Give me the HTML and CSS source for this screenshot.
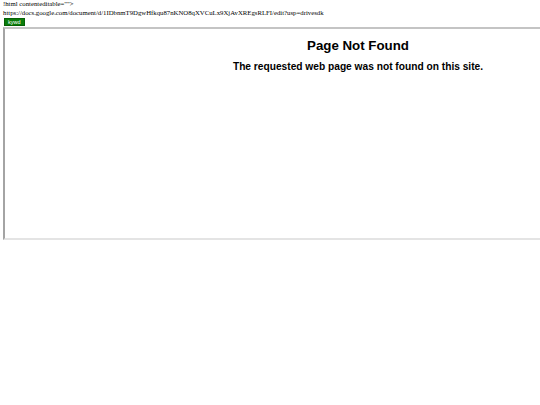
FILE: index.html
```html
<!DOCTYPE html>
<html>
<head>
<meta charset="utf-8">
<link rel="stylesheet" href="styles.css">
</head>
<body>
<div class="line">!html contenteditable=""&gt;</div>
<div class="line">https://docs.google.com/document/d/1IDbnmT9DgwHfkqu87nKNO8qXVCuLx9XjAvXREgsRLFI/edit?usp=drivesdk</div>
<button class="kywd">kywd</button>
<div class="frame">
  <div class="frame-inner">
    <h1 class="title">Page Not Found</h1>
    <h3 class="sub">The requested web page was not found on this site.</h3>
  </div>
</div>
</body>
</html>
```
FILE: styles.css
```css
html { overflow: hidden; background: #fff; }
body {
  margin: 0;
  padding: 0 0 0 3px;
  font-family: "Liberation Serif", serif;
  font-size: 6.75px;
  line-height: 8.5px;
  color: #000;
}
.line { white-space: nowrap; }
.kywd {
  display: block;
  margin: 1px 0 0 1px;
  padding: 0 3px;
  height: 8px;
  font-family: "Liberation Sans", sans-serif;
  font-size: 5.5px;
  line-height: 6px;
  color: #fff;
  background: #0a7d0a;
  border: 1px solid #066006;
  border-radius: 0;
}
.frame {
  margin-top: 1px;
  width: 720px;
  height: 209px;
  border-style: solid;
  border-width: 2px;
  border-top-color: #c4c4c4;
  border-left-color: #a4a4a4;
  border-bottom-color: #e4e4e4;
  border-right-color: #e4e4e4;
  box-sizing: content-box;
}
.frame-inner {
  width: 706px;
  text-align: center;
  font-family: "Liberation Sans", sans-serif;
  padding-top: 8px;
}
.title {
  margin: 0;
  font-size: 13.3px;
  line-height: 18px;
  font-weight: bold;
}
.sub {
  margin: 5px 0 0;
  font-size: 10.2px;
  line-height: 13px;
  font-weight: bold;
}
```
